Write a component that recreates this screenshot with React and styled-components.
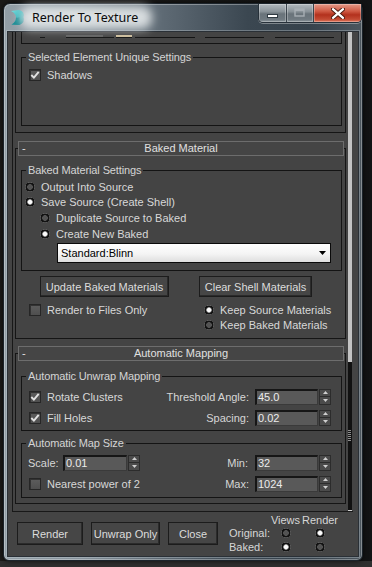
import React from "react";
import styled, { createGlobalStyle, css } from "styled-components";

const GlobalStyle = createGlobalStyle`
  html, body { margin: 0; padding: 0; }
  body {
    width: 372px; height: 567px; overflow: hidden;
    background: #151617;
    font-family: "Liberation Sans", Arial, sans-serif;
  }
  * { box-sizing: border-box; }
`;

const Desktop = styled.div`
  width: 372px;
  height: 567px;
  padding: 3px 0 0 3px;
  overflow: hidden;
  background:
    linear-gradient(to bottom, transparent 0 561px, #2f2f2f 561px 567px),
    linear-gradient(to right, #1c1b19, #121314);
`;

const Window = styled.div`
  width: 360px;
  height: 558px;
  display: flex;
  flex-direction: column;
  padding: 0 3px 3px;
  border: 1px solid #1c242b;
  border-radius: 7px 7px 6px 6px;
  background: linear-gradient(to right, #939fa7 0%, #86929b 22%, #5d6973 45%, #3b4751 68%, #36424c 85%, #4c565e 100%);
  box-shadow: inset 0 0 0 1px rgba(255, 255, 255, 0.32), 0 0 5px rgba(0, 0, 0, 0.7);
`;

const TitleBar = styled.div`
  height: 27px;
  margin: 0 -3px;
  padding-left: 6px;
  display: flex;
  align-items: center;
`;

const AppIcon = styled.svg`
  width: 16px;
  height: 17px;
  flex: none;
`;

const TitleText = styled.span`
  position: relative;
  isolation: isolate;
  margin-left: 6px;
  font-family: "Noto Sans", "Open Sans", sans-serif;
  font-size: 12.5px;
  color: #0b0b0b;
  white-space: nowrap;
  &::before {
    content: "";
    position: absolute;
    inset: -3px -14px -3px -12px;
    background: rgba(235, 238, 240, 0.85);
    filter: blur(5px);
    border-radius: 10px;
    z-index: -1;
  }
`;

const CaptionGroup = styled.div`
  margin-left: auto;
  align-self: flex-start;
  display: flex;
  height: 19px;
  border: 1px solid #27313a;
  border-top: none;
  border-radius: 0 0 5px 5px;
  overflow: hidden;
  box-shadow: 0 1px 0 rgba(255, 255, 255, 0.35);
`;

const CaptionButton = styled.div`
  width: ${(p) => p.$w}px;
  display: flex;
  align-items: center;
  justify-content: center;
  ${(p) =>
    p.$close
      ? css`
          background: linear-gradient(to bottom, #e59a88 0%, #cf5a44 40%, #b3311d 60%, #c24a33 85%, #e07a60 100%);
        `
      : css`
          background: linear-gradient(to bottom, #b2b9be 0%, #8a9399 42%, #69737a 55%, #6f7980 85%, #8c969c 100%);
          border-right: 1px solid #3a444c;
        `}
  box-shadow: inset 0 0 0 1px rgba(255, 255, 255, 0.28);
`;

const Client = styled.div`
  flex: 1;
  display: flex;
  flex-direction: column;
  background: #444444;
  border: 1px solid #2a3036;
  box-shadow: 0 0 0 1px rgba(210, 218, 224, 0.35);
  color: #d8d8d8;
  font-size: 11px;
`;

const Viewport = styled.div`
  width: 341px;
  height: 480px;
  margin-left: 4px;
  display: flex;
  overflow: hidden;
  border-left: 1px solid #181818;
  border-bottom: 1px solid #181818;
`;

const RolloutColumn = styled.div`
  width: 333px;
  padding-left: 2px;
  display: flex;
  flex-direction: column;
  flex: none;
`;

const Scrollbar = styled.div`
  width: 4px;
  margin-left: 2px;
  display: flex;
  flex-direction: column;
`;

const ScrollTrack = styled.div`
  height: 330px;
  background: #c3c3c3;
`;

const ScrollThumb = styled.div`
  flex: 1;
  background: #111111;
  border-bottom: 1px solid #cfcfcf;
`;

const ScrollGrip = styled.div`
  width: 3px;
  height: 11px;
  margin: 68px 0 0 0;
  background: repeating-linear-gradient(to bottom, #8e8e8e 0 1px, transparent 1px 2px);
`;

const Rollout = styled.div`
  margin-top: ${(p) => p.$mt || 0}px;
  display: flex;
  flex-direction: column;
`;

const RolloutHeader = styled.div`
  position: relative;
  z-index: 1;
  height: 15px;
  margin: 0 2px 0 3px;
  border: 1px solid #6d6d6d;
  background: #454545;
  display: flex;
  align-items: center;
  line-height: 13px;
  color: #e0e0e0;
`;

const HeaderMinus = styled.span`
  width: 10px;
  padding-left: 3px;
  flex: none;
`;

const HeaderTitle = styled.span`
  flex: 1;
  text-align: center;
  margin-right: 10px;
`;

const RolloutBody = styled.div`
  border: 1px solid #151515;
  ${(p) =>
    p.$cut
      ? css`
          border-top: none;
        `
      : css`
          margin-top: -8px;
        `}
  padding: ${(p) => p.$pt}px 3px ${(p) => p.$pb}px 5px;
`;

const PartialGroup = styled.div`
  height: 12px;
  border: 1px solid #141414;
  border-top: none;
  display: flex;
  align-items: flex-start;
`;

const Stub = styled.span`
  margin-top: 3px;
  margin-left: ${(p) => p.$ml}px;
  width: ${(p) => p.$w}px;
  height: 3px;
  border-bottom: 1px solid #141414;
  background: ${(p) => (p.$tone === "field" ? "#606060" : p.$tone === "beige" ? "#cdbd9c" : "transparent")};
`;

const GroupBox = styled.fieldset`
  margin: ${(p) => p.$mt || 0}px 0 0;
  padding: ${(p) => p.$pt}px ${(p) => p.$pr || 0}px ${(p) => p.$pb}px 0;
  border: 1px solid #141414;
  min-width: 0;
`;

const Legend = styled.legend`
  margin-left: 4px;
  padding: 0 2px;
  line-height: 13px;
  font-size: 11px;
  letter-spacing: -0.12px;
  color: #d4d4d4;
`;

const OptionRow = styled.div`
  height: ${(p) => p.$h || 15}px;
  display: flex;
  align-items: center;
  padding-left: ${(p) => p.$indent || 0}px;
  padding-right: ${(p) => p.$pr || 0}px;
  white-space: nowrap;
`;

const RadioDot = styled.span`
  width: 10px;
  height: 10px;
  flex: none;
  border-radius: 50%;
  background: ${(p) =>
    p.$on
      ? "radial-gradient(circle closest-side, #fbfbfb 0 34%, #9a9a9a 50%, #121212 62% 86%, rgba(130,130,130,0.65) 93%, transparent 100%)"
      : "radial-gradient(circle closest-side, #535353 0 52%, #121212 62% 86%, rgba(130,130,130,0.65) 93%, transparent 100%)"};
`;

const BoxCheck = styled.span`
  width: 12px;
  height: 12px;
  flex: none;
  border: 1px solid #262626;
  background: linear-gradient(to bottom, #5d5d5d, #4f4f4f);
  box-shadow: inset 1px 1px 0 #333;
  display: flex;
  align-items: center;
  justify-content: center;
`;

const OptionText = styled.span`
  margin-left: ${(p) => p.$gap || 6}px;
  color: #d8d8d8;
`;

const Dropdown = styled.div`
  width: 274px;
  height: 20px;
  margin: 1px 0 0 35px;
  border: 1px solid #0a0a0a;
  background: linear-gradient(to bottom, #ffffff 0%, #f4f4f4 55%, #dedede 100%);
  display: flex;
  align-items: center;
  padding: 0 4px 0 3px;
  color: #000;
`;

const DropdownText = styled.span`
  flex: 1;
`;

const ButtonRow = styled.div`
  margin-top: 5px;
  display: flex;
  padding-left: 19px;
`;

const PanelButton = styled.div`
  width: ${(p) => p.$w}px;
  height: ${(p) => p.$h || 21}px;
  margin-left: ${(p) => p.$ml || 0}px;
  flex: none;
  display: flex;
  align-items: center;
  justify-content: center;
  background: #464646;
  border: 1px solid #1c1c1c;
  box-shadow: inset -1px -1px 0 #2b2b2b;
  color: #dcdcdc;
  white-space: nowrap;
`;

const OptionsGrid = styled.div`
  margin-top: 5px;
  display: grid;
  grid-template-columns: 183px 1fr;
`;

const OptionCol = styled.div`
  display: flex;
  flex-direction: column;
`;

const RightControls = styled.div`
  margin-left: auto;
  display: flex;
  align-items: center;
`;

const FieldLabel = styled.span`
  width: ${(p) => (p.$w ? `${p.$w}px` : "auto")};
  margin-right: ${(p) => p.$mr || 0}px;
  color: #d6d6d6;
`;

const SpinBox = styled.div`
  display: flex;
  height: 16px;
`;

const SpinField = styled.div`
  width: ${(p) => p.$w}px;
  height: 16px;
  background: #595959;
  border-style: solid;
  border-color: #161616 #3a3a3a #3a3a3a #161616;
  border-width: 2px 1px 1px 2px;
  color: #ececec;
  line-height: 12px;
  padding-left: 1px;
`;

const SpinArrows = styled.div`
  width: 12px;
  margin-left: 1px;
  display: flex;
  flex-direction: column;
  border: 1px solid #2c2c2c;
  background: #4b4b4b;
`;

const SpinArrow = styled.div`
  flex: 1;
  display: flex;
  align-items: center;
  justify-content: center;
  & + & {
    border-top: 1px solid #2c2c2c;
  }
`;

const Footer = styled.div`
  flex: 1;
  display: flex;
  align-items: flex-start;
  padding-left: 9px;
`;

const FooterButtons = styled.div`
  margin-top: 10px;
  display: flex;
  gap: 8px;
`;

const ViewGrid = styled.div`
  margin: 1px 0 0 11px;
  display: grid;
  grid-template-columns: 41px 31px 38px;
  grid-template-rows: 13px 13px 15px;
  align-items: center;
  white-space: nowrap;
`;

const GridCell = styled.div`
  display: flex;
  justify-content: ${(p) => (p.$center ? "center" : "flex-start")};
  align-items: center;
  color: #d6d6d6;
`;

const Check = () => (
  <svg width="10" height="10" viewBox="0 0 10 10">
    <path d="M1.3 5 L3.9 7.6 L8.7 1.8" fill="none" stroke="#e2e2e2" strokeWidth="1.9" />
  </svg>
);

const Arrow = ({ up }) => (
  <svg width="5" height="3" viewBox="0 0 5 3">
    <path d={up ? "M0 3 L2.5 0 L5 3Z" : "M0 0 L5 0 L2.5 3Z"} fill="#cfcfcf" />
  </svg>
);

const Radio = ({ on, label, indent, gap = 6, h }) => (
  <OptionRow $indent={indent} $h={h}>
    <RadioDot $on={on} />
    <OptionText $gap={gap}>{label}</OptionText>
  </OptionRow>
);

const CheckBox = ({ checked, label, indent = 7, h }) => (
  <OptionRow $indent={indent} $h={h}>
    <BoxCheck>{checked && <Check />}</BoxCheck>
    <OptionText $gap={6}>{label}</OptionText>
  </OptionRow>
);

const Spinner = ({ value, w }) => (
  <SpinBox>
    <SpinField $w={w}>{value}</SpinField>
    <SpinArrows>
      <SpinArrow>
        <Arrow up />
      </SpinArrow>
      <SpinArrow>
        <Arrow />
      </SpinArrow>
    </SpinArrows>
  </SpinBox>
);

export default function App() {
  return (
    <>
      <GlobalStyle />
      <Desktop>
        <Window>
          <TitleBar>
            <AppIcon viewBox="0 0 16 17">
              <defs>
                <linearGradient id="ti" x1="0" y1="0" x2="1" y2="1">
                  <stop offset="0" stopColor="#7fe3e4" />
                  <stop offset="0.5" stopColor="#29b0b6" />
                  <stop offset="1" stopColor="#0c6f79" />
                </linearGradient>
              </defs>
              <path d="M1 2 L9 1 Q15 2.5 13.5 8 Q15.5 13 9.5 16 L1.5 15.5 Q6 13 6 8.5 Q6 4.5 1 2Z" fill="url(#ti)" />
              <path d="M6 8.5 Q8 9 9.5 8.3 Q10 11 9.5 16 L1.5 15.5 Q6 13 6 8.5Z" fill="#0f7e86" opacity="0.7" />
            </AppIcon>
            <TitleText>Render To Texture</TitleText>
            <CaptionGroup>
              <CaptionButton $w={28}>
                <svg width="12" height="12" viewBox="0 0 12 12">
                  <rect x="0.5" y="7.5" width="10" height="3" fill="#ffffff" stroke="#2f3a42" />
                </svg>
              </CaptionButton>
              <CaptionButton $w={27}>
                <svg width="12" height="10" viewBox="0 0 12 10">
                  <rect x="1" y="1" width="9" height="7" fill="none" stroke="#a7aeb4" strokeWidth="1.4" />
                  <rect x="1" y="1" width="9" height="2" fill="#a7aeb4" />
                </svg>
              </CaptionButton>
              <CaptionButton $w={47} $close>
                <svg width="14" height="11" viewBox="0 0 14 11">
                  <path d="M2 1.2 L12 9.8 M12 1.2 L2 9.8" stroke="#4a1a10" strokeWidth="4.2" strokeLinecap="round" />
                  <path d="M2 1.2 L12 9.8 M12 1.2 L2 9.8" stroke="#ffffff" strokeWidth="2.3" strokeLinecap="round" />
                </svg>
              </CaptionButton>
            </CaptionGroup>
          </TitleBar>

          <Client>
            <Viewport>
              <RolloutColumn>
                <Rollout>
                  <RolloutBody $cut $pt={0} $pb={6}>
                    <PartialGroup>
                      <Stub $ml={18} $w={5} />
                      <Stub $ml={21} $w={37} $tone="field" />
                      <Stub $ml={0} $w={11} />
                      <Stub $ml={2} $w={16} $tone="beige" />
                      <Stub $ml={3} $w={60} />
                      <Stub $ml={10} $w={59} />
                      <Stub $ml={11} $w={59} />
                    </PartialGroup>
                    <GroupBox $mt={7} $pt={3} $pb={43}>
                      <Legend>Selected Element Unique Settings</Legend>
                      <CheckBox checked label="Shadows" />
                    </GroupBox>
                  </RolloutBody>
                </Rollout>

                <Rollout $mt={8}>
                  <RolloutHeader>
                    <HeaderMinus>-</HeaderMinus>
                    <HeaderTitle>Baked Material</HeaderTitle>
                  </RolloutHeader>
                  <RolloutBody $pt={15} $pb={6}>
                    <GroupBox $pt={2} $pb={7}>
                      <Legend>Baked Material Settings</Legend>
                      <Radio indent={3} h={15} label="Output Into Source" />
                      <Radio indent={3} h={16} on label="Save Source (Create Shell)" />
                      <Radio indent={18} h={16} label="Duplicate Source to Baked" />
                      <Radio indent={18} h={16} on label="Create New Baked" />
                      <Dropdown>
                        <DropdownText>Standard:Blinn</DropdownText>
                        <svg width="7" height="4" viewBox="0 0 7 4">
                          <path d="M0 0 L7 0 L3.5 4Z" fill="#000" />
                        </svg>
                      </Dropdown>
                    </GroupBox>
                    <ButtonRow>
                      <PanelButton $w={129}>Update Baked Materials</PanelButton>
                      <PanelButton $w={113} $ml={30}>Clear Shell Materials</PanelButton>
                    </ButtonRow>
                    <OptionsGrid>
                      <OptionCol>
                        <CheckBox label="Render to Files Only" indent={8} />
                      </OptionCol>
                      <OptionCol>
                        <Radio on label="Keep Source Materials" />
                        <Radio label="Keep Baked Materials" />
                      </OptionCol>
                    </OptionsGrid>
                  </RolloutBody>
                </Rollout>

                <Rollout $mt={7}>
                  <RolloutHeader>
                    <HeaderMinus>-</HeaderMinus>
                    <HeaderTitle>Automatic Mapping</HeaderTitle>
                  </RolloutHeader>
                  <RolloutBody $pt={16} $pb={5}>
                    <GroupBox $pt={3} $pb={2}>
                      <Legend>Automatic Unwrap Mapping</Legend>
                      <OptionRow $h={21} $indent={7} $pr={10}>
                        <BoxCheck>
                          <Check />
                        </BoxCheck>
                        <OptionText $gap={6}>Rotate Clusters</OptionText>
                        <RightControls>
                          <FieldLabel $mr={6}>Threshold Angle:</FieldLabel>
                          <Spinner value="45.0" w={63} />
                        </RightControls>
                      </OptionRow>
                      <OptionRow $h={21} $indent={7} $pr={10}>
                        <BoxCheck>
                          <Check />
                        </BoxCheck>
                        <OptionText $gap={6}>Fill Holes</OptionText>
                        <RightControls>
                          <FieldLabel $mr={6}>Spacing:</FieldLabel>
                          <Spinner value="0.02" w={63} />
                        </RightControls>
                      </OptionRow>
                    </GroupBox>
                    <GroupBox $mt={6} $pt={2} $pb={3}>
                      <Legend>Automatic Map Size</Legend>
                      <OptionRow $h={21} $indent={6} $pr={10}>
                        <FieldLabel $w={35}>Scale:</FieldLabel>
                        <Spinner value="0.01" w={64} />
                        <RightControls>
                          <FieldLabel $mr={7}>Min:</FieldLabel>
                          <Spinner value="32" w={63} />
                        </RightControls>
                      </OptionRow>
                      <OptionRow $h={21} $indent={7} $pr={10}>
                        <BoxCheck />
                        <OptionText $gap={6}>Nearest power of 2</OptionText>
                        <RightControls>
                          <FieldLabel $mr={6}>Max:</FieldLabel>
                          <Spinner value="1024" w={63} />
                        </RightControls>
                      </OptionRow>
                    </GroupBox>
                  </RolloutBody>
                </Rollout>
              </RolloutColumn>
              <Scrollbar>
                <ScrollTrack />
                <ScrollThumb>
                  <ScrollGrip />
                </ScrollThumb>
              </Scrollbar>
            </Viewport>

            <Footer>
              <FooterButtons>
                <PanelButton $w={66} $h={23}>Render</PanelButton>
                <PanelButton $w={69} $h={23}>Unwrap Only</PanelButton>
                <PanelButton $w={50} $h={23}>Close</PanelButton>
              </FooterButtons>
              <ViewGrid>
                <GridCell />
                <GridCell $center>Views</GridCell>
                <GridCell $center>Render</GridCell>
                <GridCell>Original:</GridCell>
                <GridCell $center>
                  <RadioDot />
                </GridCell>
                <GridCell $center>
                  <RadioDot $on />
                </GridCell>
                <GridCell>Baked:</GridCell>
                <GridCell $center>
                  <RadioDot $on />
                </GridCell>
                <GridCell $center>
                  <RadioDot />
                </GridCell>
              </ViewGrid>
            </Footer>
          </Client>
        </Window>
      </Desktop>
    </>
  );
}
